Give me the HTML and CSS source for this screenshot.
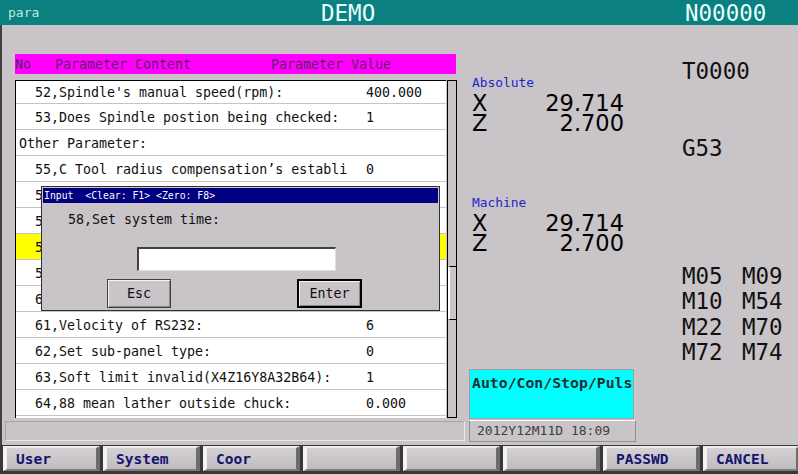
FILE: index.html
```html
<!DOCTYPE html>
<html>
<head>
<meta charset="utf-8">
<link rel="stylesheet" href="styles.css">
</head>
<body>
<div class="screen">
  <header class="titlebar">
    <span class="app">para</span>
    <span class="mode">DEMO</span>
    <span class="nnum">N00000</span>
  </header>
  <main class="main">
    <section class="params">
      <div class="param-head"><span class="h-no">No</span><span class="h-content">Parameter Content</span><span class="h-value">Parameter Value</span></div>
      <div class="param-body">
        <div class="param-table">
          <div class="row first"><span class="name">52,Spindle's manual speed(rpm):</span><span class="val">400.000</span></div>
          <div class="row"><span class="name">53,Does Spindle postion being checked:</span><span class="val">1</span></div>
          <div class="row group"><span class="name">Other Parameter:</span><span class="val"></span></div>
          <div class="row"><span class="name">55,C Tool radius compensation’s establi</span><span class="val">0</span></div>
          <div class="row"><span class="name">56</span><span class="val"></span></div>
          <div class="row"><span class="name">57</span><span class="val"></span></div>
          <div class="row sel"><span class="name">58</span><span class="val"></span></div>
          <div class="row"><span class="name">59</span><span class="val"></span></div>
          <div class="row"><span class="name">60</span><span class="val"></span></div>
          <div class="row"><span class="name">61,Velocity of RS232:</span><span class="val">6</span></div>
          <div class="row"><span class="name">62,Set sub-panel type:</span><span class="val">0</span></div>
          <div class="row"><span class="name">63,Soft limit invalid(X4Z16Y8A32B64):</span><span class="val">1</span></div>
          <div class="row"><span class="name">64,88 mean lather outside chuck:</span><span class="val">0.000</span></div>
        </div>
        <div class="scrollbar"><div class="thumb"></div></div>
      </div>
      <div class="status-line"></div>

      <div class="dialog">
        <div class="dlg-title">Input  &lt;Clear: F1&gt; &lt;Zero: F8&gt;</div>
        <div class="dlg-prompt">58,Set system time:</div>
        <div class="dlg-input"></div>
        <div class="dlg-buttons">
          <div class="btn esc">Esc</div>
          <div class="btn enter">Enter</div>
        </div>
      </div>
    </section>

    <section class="info">
      <div class="coords">
        <div class="label abs">Absolute</div>
        <div class="axis"><span>X</span><span>29.714</span></div>
        <div class="axis"><span>Z</span><span>2.700</span></div>
        <div class="label mach">Machine</div>
        <div class="axis"><span>X</span><span>29.714</span></div>
        <div class="axis"><span>Z</span><span>2.700</span></div>
        <div class="mode-box">Auto/Con/Stop/Puls</div>
        <div class="date-box">2012Y12M11D 18:09</div>
      </div>
      <div class="codes">
        <div class="tcode">T0000</div>
        <div class="gcode">G53</div>
        <div class="mcodes">
          <span>M05</span><span>M09</span>
          <span>M10</span><span>M54</span>
          <span>M22</span><span>M70</span>
          <span>M72</span><span>M74</span>
        </div>
      </div>
    </section>
  </main>
  <footer class="softkeys">
    <div class="key">User</div>
    <div class="key">System</div>
    <div class="key">Coor</div>
    <div class="key"></div>
    <div class="key"></div>
    <div class="key"></div>
    <div class="key">PASSWD</div>
    <div class="key">CANCEL</div>
  </footer>
</div>
</body>
</html>
```

FILE: styles.css
```css
* { box-sizing: border-box; }
html, body { margin: 0; padding: 0; }
body {
  width: 798px;
  height: 474px;
  overflow: hidden;
  background: #c8c4c8;
  font-family: "DejaVu Sans Mono", monospace;
  color: #101010;
}
.screen {
  width: 798px;
  height: 474px;
  display: flex;
  flex-direction: column;
}

/* title bar */
.titlebar {
  height: 25px;
  flex-shrink: 0;
  background: #0a8080;
  display: flex;
  align-items: center;
  padding-left: 8px;
}
.titlebar .app {
  width: 313px;
  font-size: 13px;
  color: #c8e4e4;
}
.titlebar .mode {
  width: 364px;
  font-size: 22.5px;
  color: #e8ffff;
}
.titlebar .nnum {
  font-size: 22.5px;
  color: #e8ffff;
}

/* main */
.main {
  height: 420px;
  flex-shrink: 0;
  display: flex;
  border-left: 2px solid #404040;
}
.params {
  position: relative;
  flex: 0 0 467px;
  width: 467px;
  padding-top: 29px;
}
.param-head {
  margin-left: 13px;
  width: 441px;
  height: 20px;
  background: #ff00ff;
  color: #5a2064;
  font-size: 13.3px;
  display: flex;
  align-items: center;
  white-space: pre;
}
.h-no { width: 40px; }
.h-content { width: 216px; }
.param-body {
  margin-top: 6px;
  margin-left: 13px;
  height: 338px;
  display: flex;
}
.param-table {
  width: 431px;
  height: 338px;
  background: #fff;
  border-left: 1px solid #000;
  border-top: 1px solid #000;
  font-size: 13.3px;
  overflow: hidden;
}
.row {
  height: 26px;
  border-bottom: 1px solid #c4c4c4;
  display: flex;
  align-items: center;
  padding-left: 19px;
  padding-top: 2px;
  white-space: pre;
}
.row.first { height: 23px; padding-top: 0; }
.row.group { padding-left: 3px; }
.row.group .name { width: 347px; }
.row.sel { background: #ffff00; }
.row .name { width: 331px; overflow: hidden; }
.scrollbar {
  margin-left: 1px;
  width: 10px;
  height: 338px;
  border: 1px solid #000;
  background: #c8c4c8;
  padding-top: 185px;
}
.thumb {
  height: 54px;
  border-top: 1px solid #000;
  border-bottom: 1px solid #000;
  border-left: 2px solid #fff;
  background: #c8c4c8;
}
.status-line {
  margin-top: 3px;
  margin-left: 3px;
  width: 460px;
  height: 20px;
  border: 1px solid #a8a4a8;
  border-bottom-color: #e8e8e8;
  border-right-color: #e8e8e8;
}

/* dialog */
.dialog {
  position: absolute;
  left: 39px;
  top: 161px;
  width: 399px;
  height: 125px;
  background: #c8c4c8;
  border: 1px solid #303030;
  padding: 1px;
}
.dlg-title {
  height: 15px;
  background: #000080;
  color: #fff;
  font-size: 9.8px;
  line-height: 15px;
  padding-left: 1px;
  white-space: pre;
}
.dlg-prompt {
  margin-top: 9px;
  margin-left: 25px;
  height: 16px;
  line-height: 16px;
  font-size: 13.3px;
}
.dlg-input {
  margin-top: 19px;
  margin-left: 94px;
  width: 199px;
  height: 24px;
  background: #fff;
  border-top: 2px solid #404040;
  border-left: 2px solid #404040;
  border-right: 1px solid #e0e0e0;
  border-bottom: 1px solid #e0e0e0;
}
.dlg-buttons {
  margin-top: 8px;
  margin-left: 64px;
  display: flex;
}
.btn {
  height: 29px;
  display: flex;
  align-items: center;
  justify-content: center;
  font-size: 13.3px;
  background: #c8c4c8;
  border: 1px solid #404040;
  box-shadow: inset 1px 1px 0 #f4f4f4, inset -1px -1px 0 #888;
}
.btn.esc { width: 64px; }
.btn.enter {
  width: 65px;
  margin-left: 126px;
  border: 2px solid #000;
}

/* info panel */
.info {
  flex: 1 1 auto;
  min-width: 0;
  display: flex;
}
.coords {
  flex: 0 0 213px;
  padding-top: 51px;
}
.label {
  padding-left: 3px;
  height: 14px;
  line-height: 14px;
  font-size: 12.9px;
  color: #2424c8;
}
.label.mach { margin-top: 63px; }
.axis {
  margin-top: 3px;
  width: 155px;
  padding-left: 3px;
  height: 20px;
  line-height: 20px;
  display: flex;
  justify-content: space-between;
  font-family: "DejaVu Sans", sans-serif;
  font-size: 22.5px;
  color: #000;
}
.axis + .axis { margin-top: 0; }
.mode-box {
  margin-top: 116px;
  width: 165px;
  height: 50px;
  background: #00ffff;
  border: 1px solid #a0a0a0;
  font-size: 14.8px;
  font-weight: bold;
  color: #203030;
  padding: 5px 0 0 2px;
  line-height: 16px;
  white-space: nowrap;
}
.date-box {
  margin-top: 1px;
  width: 167px;
  height: 22px;
  border: 1px solid #909090;
  border-top-color: #fff;
  color: #404040;
  font-size: 13px;
  line-height: 20px;
  padding-left: 7px;
}
.codes {
  flex: 1 1 auto;
  min-width: 0;
  padding-top: 34px;
  font-size: 22.5px;
  color: #101010;
}
.tcode { height: 24px; line-height: 24px; }
.gcode { margin-top: 53px; height: 24px; line-height: 24px; }
.mcodes {
  margin-top: 104px;
  display: grid;
  grid-template-columns: 60px 60px;
  grid-auto-rows: 25.4px;
  line-height: 25.4px;
}

/* soft keys */
.softkeys {
  height: 29px;
  flex-shrink: 0;
  background: #383838;
  display: flex;
  gap: 3px;
  padding-left: 3px;
  padding-top: 1px;
  padding-bottom: 3px;
  overflow: hidden;
}
.key {
  flex: 0 0 97px;
  height: 25px;
  background: linear-gradient(#d4d0d4, #c0bcc0);
  border-top: 2px solid #ececec;
  border-left: 4px solid #f4f4f4;
  border-right: 4px solid #6c6c6c;
  border-bottom: 2px solid #7c7c7c;
  color: #14146e;
  font-weight: bold;
  font-size: 14.5px;
  line-height: 22px;
  padding-left: 9px;
}
```
